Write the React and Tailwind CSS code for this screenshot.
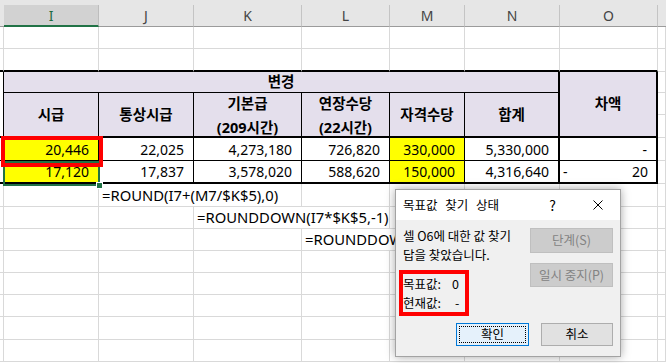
import React from "react";

const G = "border-r border-b border-[#d9d9d9]";
const NUM = "flex items-center justify-end pr-[9px] text-[14px] text-black";
const HD = "bg-[#e4dfec] flex flex-col items-center justify-center font-bold text-[14.5px] text-black";
const FX = "flex items-center pl-[3px] whitespace-nowrap text-[14.8px] text-black ";

function Blank({ n, prefix }) {
  return Array.from({ length: n }, (_, i) => <div key={prefix + i} className={G} />);
}

export default function App() {
  const letters = ["J", "K", "L", "M", "N", "O"];
  return (
    <div className="relative w-[666px] h-[363px] overflow-hidden bg-white font-['Noto_Sans','Noto_Sans_CJK_KR',sans-serif]">
      <div className="grid grid-cols-[4px_95px_95px_108px_88px_75px_95px_98px_8px] grid-rows-[5px_22px_22px_23px_21px_22px_23px_23px_23px_23px_22px_22px_22px_22px_22px_23px_22px_1px]">
        {/* top strip */}
        <div className="col-span-9 bg-[#e6e6e6]" />
        {/* column header */}
        <div className="bg-[#e6e6e6] border-b border-[#9b9b9b]" />
        <div className="bg-[#d2d2d2] border-r border-[#bdbdbd] border-b-2 border-b-[#217346] flex items-center justify-center text-[14px] text-[#1d6b40]">I</div>
        {letters.map((l) => (
          <div key={l} className="bg-[#e6e6e6] border-r border-[#c4c4c4] border-b border-b-[#9b9b9b] flex items-center justify-center text-[14px] text-[#444]">{l}</div>
        ))}
        <div className="bg-[#e6e6e6] border-b border-[#9b9b9b]" />

        {/* row 27-49 */}
        <Blank n={9} prefix="r1-" />
        {/* row 49-72 */}
        {Array.from({ length: 8 }, (_, i) => (
          <div key={"r2-" + i} className="border-r border-r-[#d9d9d9] border-b-2 border-b-black" />
        ))}
        <div className={G} />

        {/* row 72-93 */}
        <div className="row-span-3 border-r border-b-2 border-black" />
        <div className={"col-span-6 border-r-2 border-b border-black " + HD}>변경</div>
        <div className={"row-span-3 border-r-2 border-b-2 border-black " + HD}>차액</div>
        <div className={G} />

        {/* sub header 93-138 */}
        <div className={"row-span-2 border-r border-b-2 border-black " + HD}>시급</div>
        <div className={"row-span-2 border-r border-b-2 border-black " + HD}>통상시급</div>
        <div className={"row-span-2 border-r border-b-2 border-black leading-[24px] " + HD}>
          <span>기본급</span>
          <span>(209시간)</span>
        </div>
        <div className={"row-span-2 border-r border-b-2 border-black leading-[24px] " + HD}>
          <span>연장수당</span>
          <span>(22시간)</span>
        </div>
        <div className={"row-span-2 border-r border-b-2 border-black " + HD}>자격수당</div>
        <div className={"row-span-2 border-r-2 border-b-2 border-black " + HD}>합계</div>
        <div className={G} />
        <div className={G} />

        {/* data row 1 */}
        <div className="border-r border-b border-black" />
        <div className={"bg-[#ffff00] border-r border-b border-black " + NUM}>20,446</div>
        <div className={"border-r border-b border-black " + NUM}>22,025</div>
        <div className={"border-r border-b border-black " + NUM}>4,273,180</div>
        <div className={"border-r border-b border-black " + NUM}>726,820</div>
        <div className={"bg-[#ffff00] border-r border-b border-black " + NUM}>330,000</div>
        <div className={"border-r-2 border-b border-black " + NUM}>5,330,000</div>
        <div className={"border-r-2 border-b border-black " + NUM}>-</div>
        <div className={G} />

        {/* data row 2 */}
        <div className="border-r border-b-2 border-black" />
        <div className={"bg-[#ffff00] border-r border-b-2 border-black " + NUM}>17,120</div>
        <div className={"border-r border-b-2 border-black " + NUM}>17,837</div>
        <div className={"border-r border-b-2 border-black " + NUM}>3,578,020</div>
        <div className={"border-r border-b-2 border-black " + NUM}>588,620</div>
        <div className={"bg-[#ffff00] border-r border-b-2 border-black " + NUM}>150,000</div>
        <div className={"border-r-2 border-b-2 border-black " + NUM}>4,316,640</div>
        <div className="border-r-2 border-b-2 border-black flex items-center justify-between pl-[3px] pr-[8px] text-[14px] text-black">
          <span>-</span>
          <span>20</span>
        </div>
        <div className={G} />

        {/* formula row 1 */}
        <div className={G} />
        <div className={G} />
        <div className={"col-span-2 " + FX + G}>=ROUND(I7+(M7/$K$5),0)</div>
        <Blank n={5} prefix="f1-" />

        {/* formula row 2 */}
        <Blank n={3} prefix="f2a-" />
        <div className={"col-span-2 " + FX + G}>=ROUNDDOWN(I7*$K$5,-1)</div>
        <Blank n={4} prefix="f2b-" />

        {/* formula row 3 (rest hidden behind the dialog) */}
        <Blank n={4} prefix="f3a-" />
        <div className={"col-span-3 " + FX + G}>
          <span className="block w-[91px] overflow-hidden">=ROUNDDOW</span>
        </div>
        <Blank n={2} prefix="f3b-" />

        <Blank n={9} prefix="e1-" />
        <Blank n={9} prefix="e2-" />
        <Blank n={9} prefix="e3-" />
        <Blank n={9} prefix="e4-" />
        <Blank n={9} prefix="e5-" />
        <div className="col-span-9" />
      </div>

      {/* selection of I7 */}
      <div className="absolute left-[3px] top-[161px] w-[97px] h-[25px] border-2 border-[#217346]" />
      <div className="absolute left-[96px] top-[182px] w-[7px] h-[7px] bg-[#217346] border border-white" />
      {/* red highlight around I6 */}
      <div className="absolute left-[1px] top-[136px] w-[102px] h-[31px] border-4 border-[#ff0000]" />

      {/* Goal seek status dialog */}
      <div className="absolute left-[395px] top-[189px] w-[226px] h-[168px] flex flex-col border border-[#a3a3a3] bg-[#f0f0f0] shadow-[0_0_9px_rgba(0,0,0,0.35)] font-['Noto_Sans_CJK_KR',sans-serif] text-[12.5px] text-black">
        <div className="h-[30px] bg-white flex items-center pl-[7px] pr-[17px]">
          <span className="flex-1 [word-spacing:5px]">목표값 찾기 상태</span>
          <span className="text-[14px] mr-[37px]">?</span>
          <svg width="10" height="10" viewBox="0 0 10 10" className="block">
            <path d="M0.5 0.5 L9.5 9.5 M9.5 0.5 L0.5 9.5" stroke="#000" strokeWidth="1" fill="none" />
          </svg>
        </div>
        <div className="flex-1 flex flex-col">
          <div className="flex-1 flex pl-[7px] pr-[7px]">
            <div className="flex-1 pt-[6px]">
              <div className="h-[19px] leading-[19px] whitespace-nowrap">셀 O6에 대한 값 찾기</div>
              <div className="h-[19px] leading-[19px] whitespace-nowrap">답을 찾았습니다.</div>
              <div className="mt-[6px] -ml-[4px] w-[70px] border-4 border-[#ff0000] leading-[19px]">
                <div className="flex">
                  <span className="w-[49px]">목표값:</span>
                  <span>0</span>
                </div>
                <div className="flex">
                  <span className="w-[52px]">현재값:</span>
                  <span>-</span>
                </div>
              </div>
            </div>
            <div className="w-[83px] pt-[8px] flex flex-col gap-[10px]">
              <div className="h-[25px] bg-[#cccccc] border border-[#bfbfbf] flex items-center justify-center text-[#838383]">단계(S)</div>
              <div className="h-[24px] bg-[#cccccc] border border-[#bfbfbf] flex items-center justify-center text-[#838383]">일시 중지(P)</div>
            </div>
          </div>
          <div className="flex justify-end gap-[12px] pr-[7px] pb-[10px]">
            <div className="w-[73px] h-[23px] bg-[#e5f1fb] border border-[#0078d7] flex p-[2px]">
              <div className="flex-1 border border-dotted border-black flex items-center justify-center">확인</div>
            </div>
            <div className="w-[72px] h-[23px] bg-[#e1e1e1] border border-[#adadad] flex items-center justify-center">취소</div>
          </div>
        </div>
      </div>
    </div>
  );
}
